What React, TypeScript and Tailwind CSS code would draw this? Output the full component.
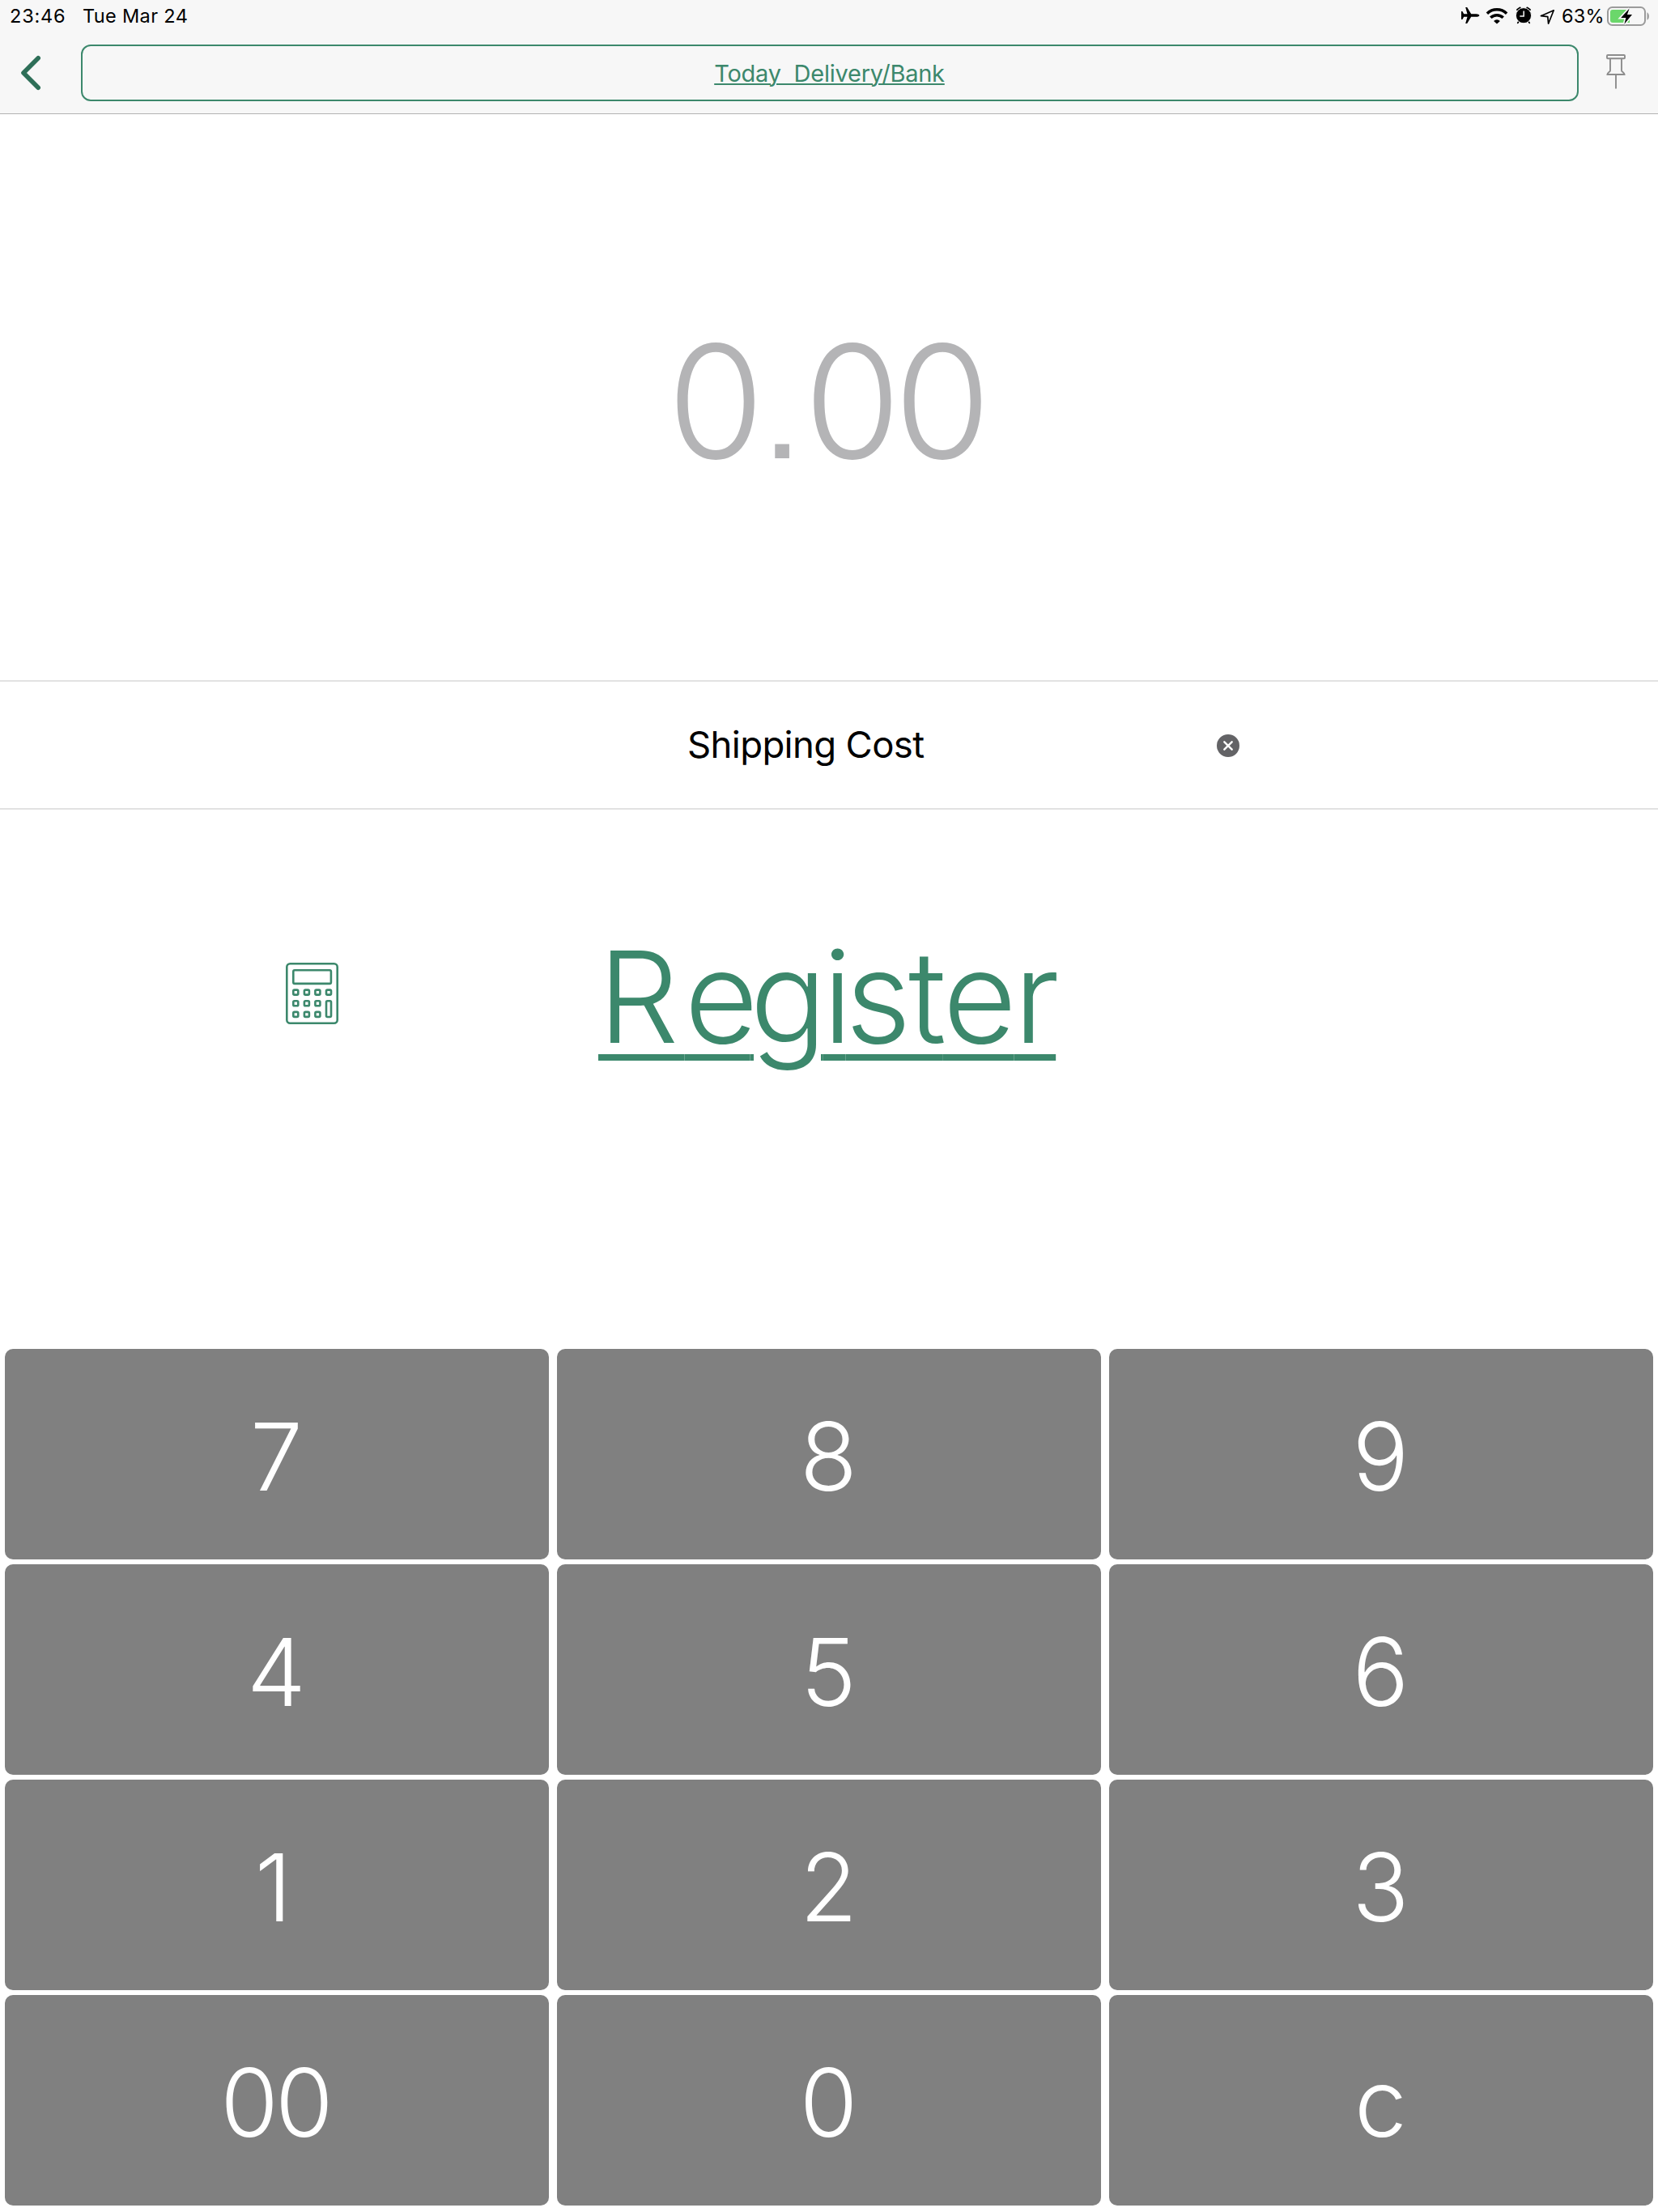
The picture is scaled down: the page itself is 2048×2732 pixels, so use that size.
const keys = [
  { label: "7" }, { label: "8" }, { label: "9" },
  { label: "4" }, { label: "5" }, { label: "6" },
  { label: "1", cls: "mr-[8px]" }, { label: "2" }, { label: "3" },
  { label: "00", cls: "mr-[3px] tracking-[-4px]" }, { label: "0" }, { label: "c" },
];

// Letter spacing of the large action label, per letter
const registerLetters = [
  ["R", "tracking-[7px]"],
  ["e", "tracking-[-10px]"],
  ["g", "tracking-[-5px]"],
  ["i", "tracking-[-8.5px]"],
  ["s", "tracking-[-3.4px]"],
  ["t", "tracking-[-4px]"],
  ["e", "tracking-[-3.5px]"],
  ["r", "tracking-[-4.6px]"],
];

function StatusIcons() {
  return (
    <svg width="120" height="40" viewBox="0 0 120 40" fill="none" className="shrink-0">
      {/* airplane */}
      <path
        fill="#000"
        d="M10.2 9h2l5 8.2h6.3c2 0 3.9.9 3.9 1.8s-1.9 1.8-3.9 1.8h-6.3l-5 8.2h-2l2.3-8.2H8.2L6.4 24H5V14h1.4l1.8 3.2h4.3z"
      />
      {/* wifi */}
      <g stroke="#000" strokeWidth="3.5">
        <path d="M36.9 16.8a17.3 17.3 0 0 1 24.2 0" />
        <path d="M41.3 21.8a11 11 0 0 1 15.4 0" />
      </g>
      <path fill="#000" d="M49 29.6l-3.9-3.7a5.6 5.6 0 0 1 7.8 0z" />
      {/* alarm */}
      <path d="M74.4 12l3.2-2.2M89.6 12l-3.2-2.2" stroke="#000" strokeWidth="2.6" strokeLinecap="round" />
      <path d="M76.2 26.4l-1.4 1.8M87.8 26.4l1.4 1.8" stroke="#000" strokeWidth="1.8" strokeLinecap="round" />
      <circle cx="82" cy="19.2" r="9.6" fill="#000" stroke="#f7f7f7" strokeWidth="1" />
      <path d="M82.2 13.4v6.6h-4.9" stroke="#f7f7f7" strokeWidth="1.5" />
      {/* location */}
      <path d="M119.2 12.8L103.4 19.7l8.4.9.8 8.6z" stroke="#000" strokeWidth="1.7" strokeLinejoin="round" />
    </svg>
  );
}

function Battery() {
  return (
    <svg width="56" height="40" viewBox="0 0 56 40" fill="none" className="shrink-0">
      <rect x="2" y="9" width="46" height="22" rx="5.5" stroke="#9b9b9b" strokeWidth="2" />
      <path d="M50.5 15.2v9.6c3.2-1.6 3.2-8 0-9.6z" fill="#9b9b9b" />
      <path d="M8 12h21v16H8a3 3 0 0 1-3-3V15a3 3 0 0 1 3-3z" fill="#6bd76b" />
      <path
        d="M28.6 10.6L18.2 21.9h6.2l-2 7.8L32 18.1h-6z"
        fill="#000"
        stroke="#f7f7f7"
        strokeWidth="3.4"
        paintOrder="stroke"
      />
    </svg>
  );
}

function Chevron() {
  return (
    <svg width="100" height="70" viewBox="0 0 100 70" fill="none" className="shrink-0">
      <path
        d="M47.2 16.8L29 35l18.2 18.2"
        stroke="#2e6f58"
        strokeWidth="5.6"
        strokeLinecap="round"
        strokeLinejoin="round"
      />
    </svg>
  );
}

function Pin() {
  return (
    <svg width="98" height="70" viewBox="0 0 98 70" fill="none" stroke="#8d8d8d" strokeWidth="1.9" className="shrink-0">
      <rect x="35" y="13" width="22" height="4.2" rx="1" />
      <path d="M39 17.5v14.8c0 1.3-3.6 2.6-3.6 4.7h21.2c0-2.1-3.6-3.4-3.6-4.7V17.5" />
      <path d="M46 37v17.4" />
    </svg>
  );
}

function Calculator() {
  const dots = [
    [8, 32.3], [21.6, 32.3], [35.1, 32.3], [48.7, 32.3],
    [8, 46], [21.6, 46], [35.1, 46],
    [8, 59.6], [21.6, 59.6], [35.1, 59.6],
  ];
  return (
    <svg width="66" height="78" viewBox="0 0 66 78" fill="none" stroke="#3c886c" strokeWidth="2.6">
      <rect x="1.3" y="1.3" width="62.4" height="73.4" rx="4" />
      <rect x="9.3" y="9.3" width="46.6" height="16.6" rx="1.6" />
      {dots.map(([x, y]) => (
        <rect key={`${x}-${y}`} x={x + 1.3} y={y + 1.3} width="6" height="6" rx="1.4" />
      ))}
      <rect x="50" y="47.3" width="6" height="19.7" rx="1.4" />
    </svg>
  );
}

export default function App() {
  return (
    <div className="flex h-[2732px] w-[2048px] flex-col overflow-hidden bg-white font-['Inter',sans-serif] text-black">
      <header className="h-[141px] border-b border-[#b2b2b2] bg-[#f7f7f7]">
        <div className="flex h-10 text-[23.5px] leading-10">
          <span className="ml-3 w-[90px] tracking-[0.8px]">23:46</span>
          <span className="tracking-[0.35px]">Tue Mar 24</span>
          <div className="ml-auto flex">
            <StatusIcons />
            <span className="ml-[9px] w-[55px] tracking-[0.2px]">63%</span>
            <Battery />
            <span className="w-2" />
          </div>
        </div>
        <div className="flex pt-[15px]">
          <Chevron />
          <button className="h-[70px] w-[1850px] rounded-[12px] border-2 border-[#3c886c] pt-px pr-px text-center text-[29px] leading-[66px] whitespace-pre text-[#3c886c]">
            <span className="tracking-[-0.24px] underline decoration-2 underline-offset-[2px]">
              {"Today  Delivery/Bank"}
            </span>
          </button>
          <Pin />
        </div>
      </header>

      <section className="flex h-[701px] justify-center border-b-2 border-[#e2e2e2] pt-[9px] pr-[8px] text-[194px] leading-[692px] font-light text-[#b4b4b6] [font-feature-settings:'ss07']">
        <span className="tracking-[-0.5px]">0.</span>
        <span className="tracking-[-8.5px]">00</span>
      </section>

      <section className="flex h-[158px] items-center border-b-2 border-[#e2e2e2] pl-[849px]">
        <span className="w-[654px] text-[45.5px] leading-[156px] tracking-[-0.65px]">Shipping Cost</span>
        <svg width="28" height="28" viewBox="0 0 28 28" className="mt-[2px]">
          <circle cx="14" cy="14" r="14" fill="#636366" />
          <path d="M9.3 9.3l9.4 9.4M18.7 9.3l-9.4 9.4" stroke="#fff" strokeWidth="2.4" strokeLinecap="round" />
        </svg>
      </section>

      <section className="flex h-[666px]">
        <div className="w-[739px] pt-[189px] pl-[353px]">
          <Calculator />
        </div>
        <button className="mt-[135px] h-[192px] text-[157px] leading-[192px] font-light whitespace-nowrap text-[#3c886c] underline decoration-[8px] underline-offset-[14px]">
          {registerLetters.map(([ch, cls], i) => (
            <span key={i} className={cls}>{ch}</span>
          ))}
        </button>
      </section>

      <section className="grid grid-cols-[repeat(3,672px)] gap-x-[10px] gap-y-[6px] pl-[6px]">
        {keys.map(({ label, cls }) => (
          <button
            key={label}
            className="h-[260px] rounded-[10px] bg-[#808080] pt-[7px] pr-px text-center text-[116px] leading-[253px] font-light text-white"
          >
            <span className={cls}>{label}</span>
          </button>
        ))}
      </section>
    </div>
  );
}
